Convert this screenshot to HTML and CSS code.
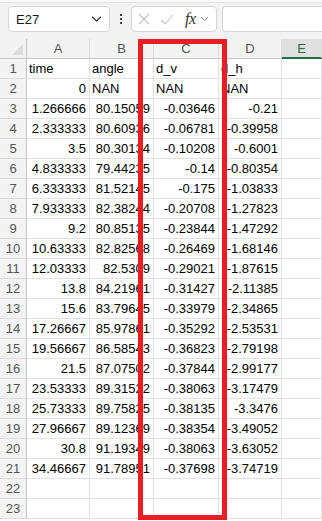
FILE: index.html
```html
<html>
<head>
  <title>Sheet</title>
  <link rel="stylesheet" href="styles.css">
</head>
<body>
  <div class="ribbon-edge"></div>
  <div class="toolbar">
    <div class="name-box">
      <span>E27</span>
      <svg class="chev" width="11" height="6" viewBox="0 0 11 6"><path d="M1 0.8 L5.5 5 L10 0.8" fill="none" stroke="#333" stroke-width="1.2"/></svg>
    </div>
    <div class="dots"><i></i><i></i><i></i></div>
    <div class="fx-box">
      <svg width="12" height="12" viewBox="0 0 12 12"><path d="M1 1 L11 11 M11 1 L1 11" stroke="#c4c4c4" stroke-width="1.1"/></svg>
      <svg width="14" height="11" viewBox="0 0 14 11"><path d="M1 6 L5 10 L13 1" fill="none" stroke="#c4c4c4" stroke-width="1.1"/></svg>
      <span class="fx">fx</span>
      <svg width="9" height="6" viewBox="0 0 9 6"><path d="M1 1 L4.5 4.5 L8 1" fill="none" stroke="#888" stroke-width="1"/></svg>
    </div>
    <div class="formula-input"></div>
  </div>

  <div class="sheet">
    <div class="grid" id="grid">
      <div class="corner"><span class="tri"></span></div>
      <div class="colhead">A</div>
      <div class="colhead">B</div>
      <div class="colhead">C</div>
      <div class="colhead">D</div>
      <div class="colhead sel">E</div>
    </div>
    <div class="callout"></div>
  </div>

  <script>
    var rows = [
      ["time", "angle", "d_v", "d_h"],
      ["0", "NAN", "NAN", "NAN"],
      ["1.266666", "80.15059", "-0.03646", "-0.21"],
      ["2.333333", "80.60936", "-0.06781", "-0.39958"],
      ["3.5", "80.30134", "-0.10208", "-0.6001"],
      ["4.833333", "79.44235", "-0.14", "-0.80354"],
      ["6.333333", "81.52145", "-0.175", "-1.03833"],
      ["7.933333", "82.38244", "-0.20708", "-1.27823"],
      ["9.2", "80.85135", "-0.23844", "-1.47292"],
      ["10.63333", "82.82568", "-0.26469", "-1.68146"],
      ["12.03333", "82.5309", "-0.29021", "-1.87615"],
      ["13.8", "84.21961", "-0.31427", "-2.11385"],
      ["15.6", "83.79645", "-0.33979", "-2.34865"],
      ["17.26667", "85.97861", "-0.35292", "-2.53531"],
      ["19.56667", "86.58543", "-0.36823", "-2.79198"],
      ["21.5", "87.07502", "-0.37844", "-2.99177"],
      ["23.53333", "89.31522", "-0.38063", "-3.17479"],
      ["25.73333", "89.75825", "-0.38135", "-3.3476"],
      ["27.96667", "89.12369", "-0.38354", "-3.49052"],
      ["30.8", "91.19349", "-0.38063", "-3.63052"],
      ["34.46667", "91.78951", "-0.37698", "-3.74719"],
      ["", "", "", ""],
      ["", "", "", ""]
    ];
    var grid = document.getElementById("grid");
    rows.forEach(function (r, i) {
      var h = document.createElement("div");
      h.className = "rowhead";
      h.textContent = i + 1;
      grid.appendChild(h);
      r.concat([""]).forEach(function (v) {
        var c = document.createElement("div");
        c.className = "cell";
        if (v !== "" && !isNaN(Number(v))) c.className += " num";
        c.textContent = v;
        grid.appendChild(c);
      });
    });
  </script>
</body>
</html>
```

FILE: styles.css
```css
* {
  box-sizing: border-box;
}

body {
  margin: 0;
  background: #fff;
  font-family: "Liberation Sans", Arial, sans-serif;
  overflow: hidden;
  width: 322px;
  height: 521px;
}

/* Ribbon edge */
.ribbon-edge {
  height: 3px;
  background: #fafafa;
  border-bottom: 1px solid #e3e3e3;
}

/* Formula bar */
.toolbar {
  height: 36px;
  background: #f3f3f3;
  display: flex;
  align-items: flex-start;
  padding: 3px 0 0 8px;
}

.name-box {
  width: 102px;
  height: 26px;
  background: #fff;
  border: 1px solid #d6d6d6;
  border-radius: 4px;
  display: flex;
  align-items: center;
  justify-content: space-between;
  padding: 0 7px 0 7px;
  font-size: 13px;
  color: #1a1a1a;
}

.dots {
  width: 21px;
  height: 26px;
  display: flex;
  flex-direction: column;
  align-items: center;
  justify-content: center;
  gap: 2px;
}

.dots i {
  width: 2px;
  height: 2px;
  background: #444;
}

.fx-box {
  width: 86px;
  height: 26px;
  background: #fff;
  border: 1px solid #d6d6d6;
  border-radius: 4px;
  display: flex;
  align-items: center;
  gap: 10px;
  padding-left: 6px;
}

.fx-box .fx {
  font-family: "Liberation Serif", serif;
  font-style: italic;
  font-size: 16px;
  color: #333;
  margin-left: 1px;
  margin-right: -6px;
  letter-spacing: -0.5px;
}

.formula-input {
  flex: 1;
  height: 26px;
  margin-left: 5px;
  background: #fff;
  border: 1px solid #d6d6d6;
  border-right: none;
  border-radius: 4px 0 0 4px;
}

/* Sheet grid */
.sheet {
  position: relative;
}

.grid {
  display: grid;
  width: 322px;
  grid-template-columns: 27px 63px 64px 65px 63px 1fr;
  grid-auto-rows: 20px;
}

.corner,
.colhead,
.rowhead {
  background: #f3f3f3;
  color: #555;
  font-size: 13px;
}

.corner {
  position: relative;
  border-right: 1px solid #c6c6c6;
  border-bottom: 1px solid #c6c6c6;
}

.corner .tri {
  position: absolute;
  right: 3px;
  bottom: 3px;
  width: 0;
  height: 0;
  border-left: 11px solid transparent;
  border-bottom: 11px solid #dcdcdc;
}

.colhead {
  display: flex;
  align-items: center;
  justify-content: center;
  border-right: 1px solid #dcdcdc;
  border-bottom: 1px solid #c6c6c6;
}

.colhead.sel {
  background: #e0e0e0;
  color: #1e6b3c;
  border-bottom: 2px solid #1e7145;
}

.rowhead {
  display: flex;
  align-items: center;
  justify-content: center;
  border-right: 1px solid #c6c6c6;
  border-bottom: 1px solid #dcdcdc;
}

.cell {
  font-size: 13px;
  color: #000;
  line-height: 19px;
  padding: 0 3px 0 2px;
  white-space: nowrap;
  overflow: visible;
  border-right: 1px solid #e1e1e1;
  border-bottom: 1px solid #e1e1e1;
  display: flex;
  justify-content: flex-start;
}

.cell.num {
  justify-content: flex-end;
}

/* Annotation box */
.callout {
  position: absolute;
  left: 138px;
  top: 0;
  width: 89px;
  height: 481px;
  border: 5px solid #ea1c24;
}
```
